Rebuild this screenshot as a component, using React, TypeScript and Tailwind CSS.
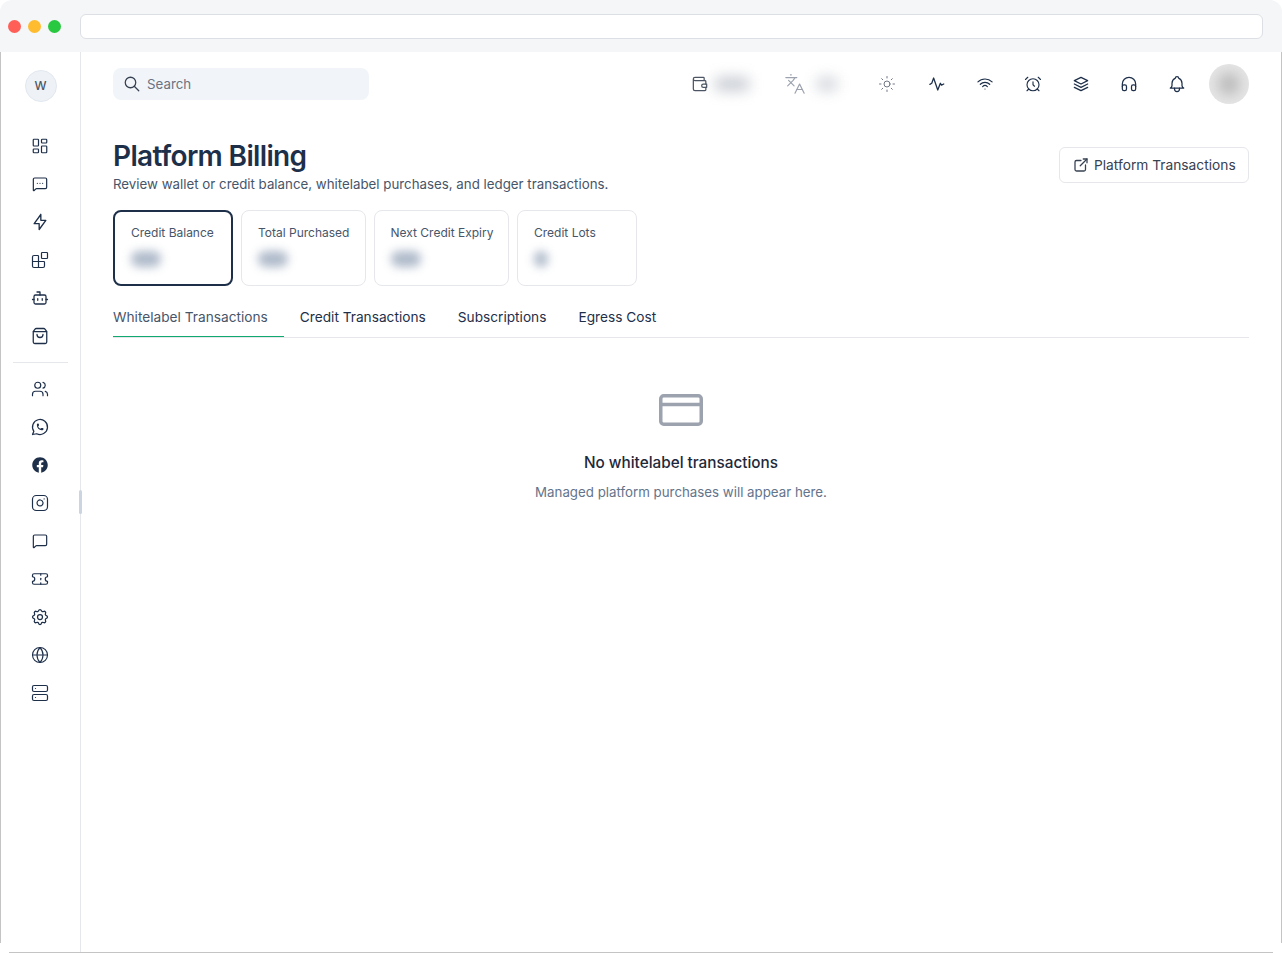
import type { ReactNode } from "react";
import {
	AlarmClock,
	Blocks,
	Bot,
	Globe,
	Instagram,
	Languages,
	LayoutDashboard,
	MessageSquare,
	MessageSquareMore,
	Server,
	ShoppingBag,
	Sun,
	Ticket,
	Users,
} from "lucide-react";
import { FaFacebook } from "react-icons/fa";
import {
	TbBell,
	TbBolt,
	TbBrandWhatsapp,
	TbExternalLink,
	TbHeadphones,
	TbSearch,
	TbSettings,
	TbStack2,
	TbWallet,
	TbWifi,
} from "react-icons/tb";

const stats = [
	{ label: "Credit Balance", width: "w-[120px]", blur: "w-[30px]", active: true },
	{ label: "Total Purchased", width: "w-[124.5px]", blur: "w-[30px]", active: false },
	{ label: "Next Credit Expiry", width: "w-[135.5px]", blur: "w-[30px]", active: false },
	{ label: "Credit Lots", width: "w-[120px]", blur: "w-[14px]", active: false },
];

const tabs = ["Credit Transactions", "Subscriptions", "Egress Cost"];

function NavItem({ children }: { children: ReactNode }) {
	return <div className="flex h-[38px] items-center justify-center pr-px text-[#1e2f4a]">{children}</div>;
}

function HeaderIcon({ children }: { children: ReactNode }) {
	return <div className="flex w-[48px] justify-center text-[#1e2f4a]">{children}</div>;
}

function ActivityIcon() {
	return (
		<svg
			width="18"
			height="18"
			viewBox="0 0 24 24"
			fill="none"
			stroke="currentColor"
			strokeWidth="1.7"
			strokeLinecap="round"
			strokeLinejoin="round"
		>
			<path d="M2.5 12.5 5 11l2.5-7 5.5 16 3.5-9 1.5 2.5 3-1.5" />
		</svg>
	);
}

function Sidebar() {
	return (
		<aside className="relative flex w-[80px] shrink-0 flex-col border-r border-[#e5e7eb]">
			<div className="mt-[18px] mb-[25px] flex justify-center">
				<div className="flex size-[32px] items-center justify-center rounded-full border border-[#e2e8f0] bg-[#eef2f6] text-xs font-medium text-[#4b5563]">
					W
				</div>
			</div>
			<NavItem><LayoutDashboard size={18} strokeWidth={1.6} /></NavItem>
			<NavItem><MessageSquareMore size={16} strokeWidth={1.8} /></NavItem>
			<NavItem><TbBolt size={20} strokeWidth={1.6} /></NavItem>
			<NavItem><Blocks size={18} strokeWidth={1.6} /></NavItem>
			<NavItem><Bot size={18} strokeWidth={1.7} /></NavItem>
			<NavItem><ShoppingBag size={18} strokeWidth={1.7} /></NavItem>
			<div className="mx-[12px] mt-[7px] mb-[7px] h-px bg-[#e5e7eb]" />
			<NavItem><Users size={18} strokeWidth={1.6} /></NavItem>
			<NavItem><TbBrandWhatsapp size={20} strokeWidth={1.5} /></NavItem>
			<NavItem><FaFacebook size={16} /></NavItem>
			<NavItem><Instagram size={18} strokeWidth={1.6} /></NavItem>
			<NavItem><MessageSquare size={16} strokeWidth={1.8} /></NavItem>
			<NavItem><Ticket size={18} strokeWidth={1.6} /></NavItem>
			<NavItem><TbSettings size={20} strokeWidth={1.5} /></NavItem>
			<NavItem><Globe size={18} strokeWidth={1.5} /></NavItem>
			<NavItem><Server size={18} strokeWidth={1.6} /></NavItem>
			<div className="absolute top-[438px] right-[-2px] h-[24px] w-[3px] rounded-full bg-[#cbd5e1]" />
		</aside>
	);
}

function Header() {
	return (
		<header className="flex h-[64px] items-center justify-between">
			<div className="flex h-[32px] w-[256px] items-center gap-[6px] rounded-lg bg-[#f1f5f9] px-[10px] text-[13.3px] text-[#6b7280]">
				<TbSearch size={18} strokeWidth={1.7} className="text-[#374151]" />
				<span className="mt-px">Search</span>
			</div>
			<div className="flex items-center">
				<div className="flex w-[94px] items-center gap-[4px] text-[#4b5563]">
					<TbWallet size={20} strokeWidth={1.5} />
					<div className="h-[14px] w-[36px] rounded-full bg-[#9ca3af] opacity-55 blur-[7px]" />
				</div>
				<div className="flex w-[79px] items-center gap-[10px] text-[#9ca3af]">
					<Languages size={22} strokeWidth={1.3} />
					<div className="h-[14px] w-[22px] rounded-full bg-[#9ca3af] opacity-45 blur-[7px]" />
				</div>
				<div className="mr-[2px] flex w-[48px] justify-center text-[#6b7280]">
					<Sun size={18} strokeWidth={1.3} />
				</div>
				<HeaderIcon><ActivityIcon /></HeaderIcon>
				<HeaderIcon><TbWifi size={20} strokeWidth={1.4} /></HeaderIcon>
				<HeaderIcon><AlarmClock size={18} strokeWidth={1.5} /></HeaderIcon>
				<HeaderIcon><TbStack2 size={20} strokeWidth={1.5} /></HeaderIcon>
				<HeaderIcon><TbHeadphones size={20} strokeWidth={1.5} /></HeaderIcon>
				<HeaderIcon><TbBell size={20} strokeWidth={1.5} /></HeaderIcon>
				<div className="ml-[8px] flex size-[40px] items-center justify-center overflow-hidden rounded-full bg-[#e6e6e6]">
					<div className="size-[22px] rounded-full bg-[#b8b8b8] blur-[7px]" />
				</div>
			</div>
		</header>
	);
}

function StatCard({ label, width, blur, active }: (typeof stats)[number]) {
	return (
		<div
			className={`${width} h-[76px] rounded-lg ${
				active ? "border-2 border-[#1e2f4a] px-[16px] pt-[13px]" : "border border-[#e5e7eb] px-[16px] pt-[14px]"
			}`}
		>
			<div className="text-xs leading-[16px] whitespace-nowrap text-[#475569]">{label}</div>
			<div className={`${blur} mt-[10px] h-[16px] rounded-full bg-[#94a3b8] opacity-75 blur-[5px]`} />
		</div>
	);
}

export default function App() {
	return (
		<div className="flex h-[953px] w-[1282px] flex-col overflow-hidden bg-white font-['Inter',sans-serif]">
			<div className="flex h-[52px] shrink-0 items-center rounded-t-xl bg-[#f5f6f8] pr-[19px] pl-[8px]">
				<div className="flex gap-[7px]">
					<span className="size-[13px] rounded-full bg-[#ff5f57]" />
					<span className="size-[13px] rounded-full bg-[#febc2e]" />
					<span className="size-[13px] rounded-full bg-[#28c840]" />
				</div>
				<div className="ml-[19px] h-[25px] flex-1 rounded-md border border-[#dcdfe4] bg-white" />
			</div>
			<div className="flex h-[891px] shrink-0 border-x border-[#c4c4c4]">
				<Sidebar />
				<main className="min-w-0 flex-1 px-[32px]">
					<Header />
					<div className="mt-[22px] flex items-start justify-between">
						<div>
							<h1 className="text-[28px] leading-[36px] font-semibold tracking-[-0.65px] text-[#1e2f4a]">
								Platform Billing
							</h1>
							<p className="text-[13.3px] leading-[20px] text-[#475569]">
								Review wallet or credit balance, whitelabel purchases, and ledger transactions.
							</p>
						</div>
						<button className="mt-[9px] flex h-[36px] w-[190px] items-center gap-[4px] rounded-md border border-[#e5e7eb] pl-[12px] text-[13.75px] text-[#374151]">
							<TbExternalLink size={18} strokeWidth={1.7} />
							Platform Transactions
						</button>
					</div>
					<div className="mt-[16px] flex gap-[8px]">
						{stats.map((s) => (
							<StatCard key={s.label} {...s} />
						))}
					</div>
					<div className="mt-[12px] flex h-[40px] items-stretch border-b border-[#e5e7eb] text-[13.7px] text-[#1e2f4a]">
						<div className="flex flex-col text-[#475569]">
							<div className="flex flex-1 items-center pr-[16px]">Whitelabel Transactions</div>
							<div className="h-px bg-[#10a970]" />
						</div>
						{tabs.map((t) => (
							<div key={t} className="flex items-center px-[16px]">
								{t}
							</div>
						))}
					</div>
					<div className="flex flex-col items-center pt-[56px]">
						<svg width="44" height="32" viewBox="0 0 44 32" fill="none" stroke="#9ca3af" strokeWidth="3.5">
							<rect x="1.75" y="1.75" width="40.5" height="28.5" rx="3" />
							<path d="M1.75 10.5h40.5" />
						</svg>
						<div className="mt-[25px] text-[15.3px] leading-[24px] font-medium text-[#1e293b]">
							No whitelabel transactions
						</div>
						<div className="mt-[7px] text-[13.3px] leading-[20px] text-[#64748b]">
							Managed platform purchases will appear here.
						</div>
					</div>
				</main>
			</div>
			<div className="h-[10px] shrink-0">
				<div className="h-[9px] w-[81px] border-r border-[#e5e7eb]" />
				<div className="mx-[9px] h-px bg-[#c4c4c4]" />
			</div>
		</div>
	);
}
